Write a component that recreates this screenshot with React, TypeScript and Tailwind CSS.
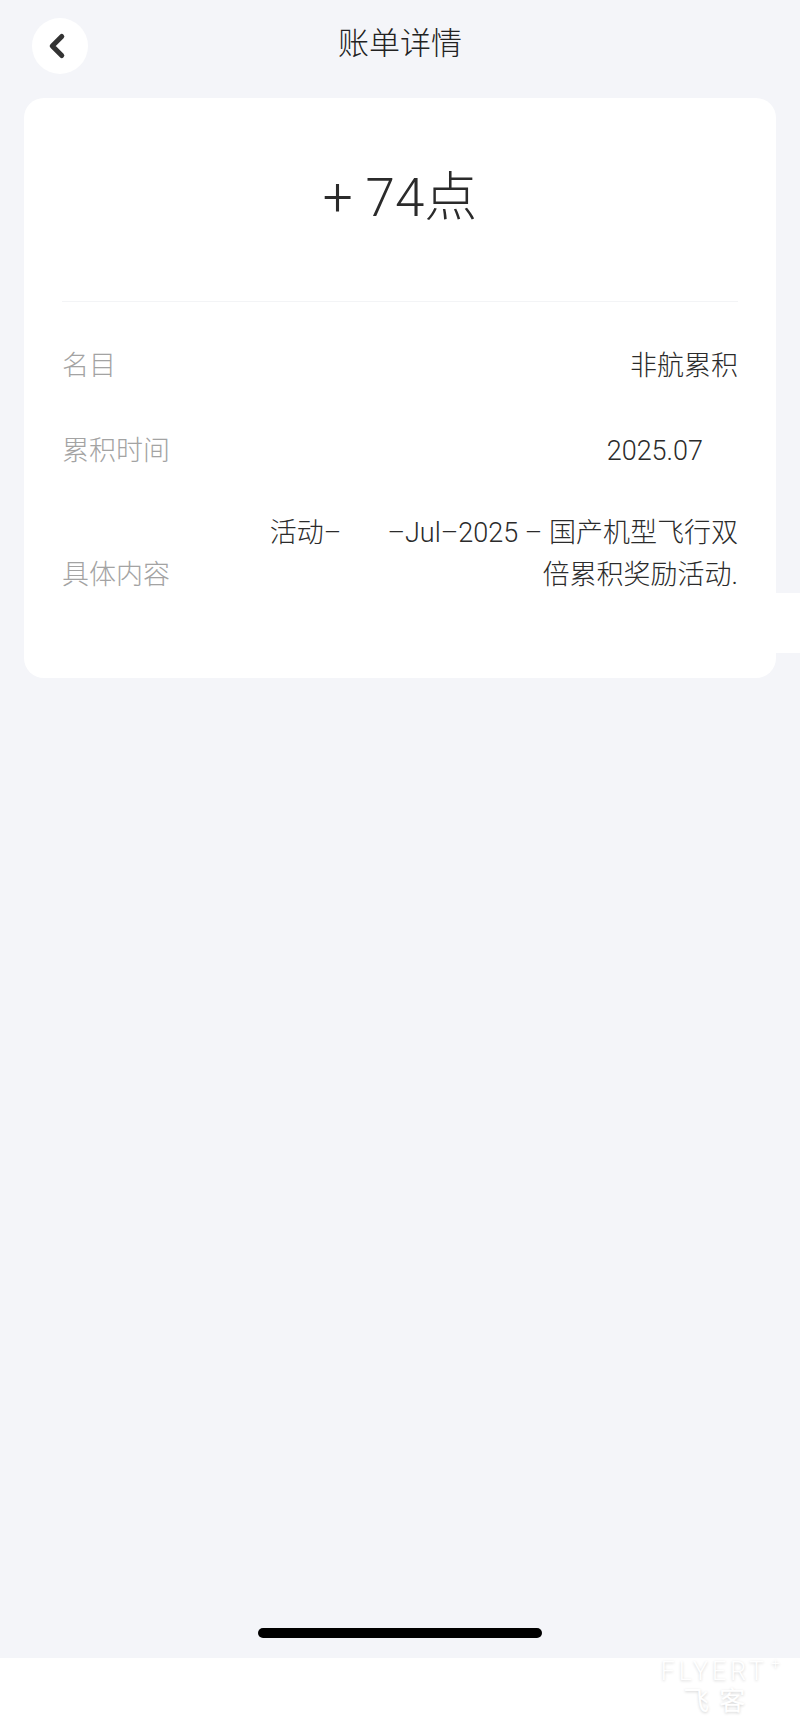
import { ChevronLeft } from "lucide-react";

const font = "font-['Roboto','Noto_Sans_CJK_SC',sans-serif]";

function Row({
  label,
  children,
  className = ""
}: {
  label: string;
  children: React.ReactNode;
  className?: string;
}) {
  return (
    <div className={`flex items-end justify-between text-[27px] leading-[42px] ${className}`}>
      <span className="shrink-0 font-light text-[#a3a3a3]">{label}</span>
      <div className="text-right font-light text-[#2b2b2b]">{children}</div>
    </div>
  );
}

export default function App() {
  return (
    <div className={`flex h-[1731px] w-full flex-col bg-[#f4f5f9] ${font}`}>
      <header className="grid grid-cols-[1fr_auto_1fr] items-center pt-[18px]">
        <button
          aria-label="返回"
          className="ml-[32px] flex h-[56px] w-[56px] items-center justify-center rounded-full bg-white text-[#333]"
        >
          <ChevronLeft size={38} strokeWidth={3.2} className="-ml-[6px]" />
        </button>
        <h1 className="-mt-[4px] text-[31px] font-light text-[#222]">账单详情</h1>
        <div />
      </header>

      <section className="relative mx-[24px] mt-[24px] rounded-[20px] bg-white px-[38px] pb-[82px]">
        <div className="flex h-[203px] items-center justify-center">
          <p className="-mt-[1px] text-[53px] font-light text-[#2b2b2b]">+ 74点</p>
        </div>
        <div className="h-px bg-[#f3f4f6]" />

        <Row label="名目" className="mt-[43px]">
          非航累积
        </Row>
        <Row label="累积时间" className="mt-[43px]">
          <span className="pr-[35px]">2025.07</span>
        </Row>
        <Row label="具体内容" className="mt-[40px]">
          <span className="block whitespace-pre">活动–       –Jul–2025 – 国产机型飞行双</span>
          <span className="block">倍累积奖励活动.</span>
        </Row>

        {/* stray white strip off the card's right edge */}
        <div className="absolute -right-[24px] top-[495px] h-[60px] w-[24px] bg-white" />
      </section>

      <div className="flex-1" />

      <div className="flex h-[62px] items-start justify-center pt-[32px]">
        <div className="h-[10px] w-[284px] rounded-full bg-black" />
      </div>

      <footer className="relative h-[73px] bg-white">
        <div className="absolute right-[32px] top-[1px] flex flex-col items-center text-white [text-shadow:0_1px_3px_rgba(0,0,0,0.18)]">
          <span className="relative text-[25px] leading-[26px] font-light tracking-[4px]">
            FLYERT
            <span className="absolute -right-[16px] -top-[8px] text-[16px] font-light">+</span>
          </span>
          <span className="mt-[2px] pl-[10px] text-[26px] leading-[28px] tracking-[10px]">飞客</span>
        </div>
      </footer>
    </div>
  );
}
